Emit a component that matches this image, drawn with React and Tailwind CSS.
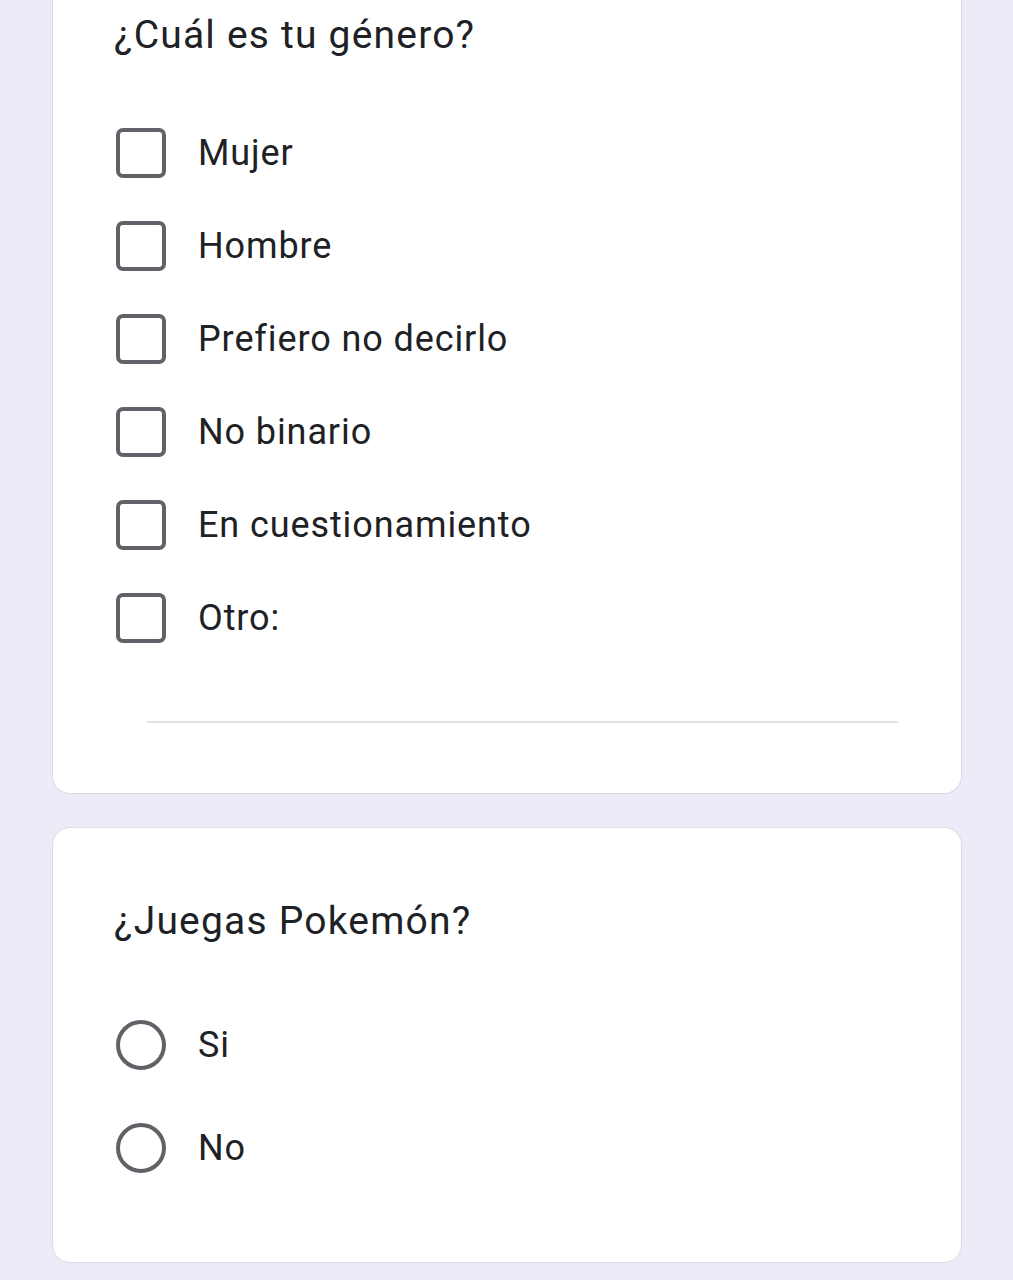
import React from "react";

const GENDER_OPTIONS = ["Mujer", "Hombre", "Prefiero no decirlo", "No binario", "En cuestionamiento", "Otro:"];
const POKEMON_OPTIONS = ["Si", "No"];

function Checkbox() {
  return <div className="w-[50px] h-[50px] shrink-0 rounded-[7px] border-[4.5px] border-[#5f6368] bg-white" />;
}

function Radio() {
  return <div className="w-[50px] h-[50px] shrink-0 rounded-full border-[4.5px] border-[#5f6368] bg-white" />;
}

export default function App() {
  return (
    <div
      className="min-h-[1280px] bg-[#eeeaf7] pl-[52px] pr-[51px] pb-[18px] flex flex-col text-[#202124]"
      style={{ fontFamily: "Roboto, 'Noto Sans', sans-serif" }}
    >
      {/* Gender card (top is cut off by the viewport) */}
      <div className="bg-white border border-t-0 border-[#dcdbe2] rounded-b-[18px] pl-[61px] pr-[63px] pt-[12px] h-[794px]">
        <h2 className="text-[39px] leading-[46px] tracking-[1.2px]">¿Cuál es tu género?</h2>
        <div className="mt-[48px] flex flex-col">
          {GENDER_OPTIONS.map((opt) => (
            <label key={opt} className="h-[93px] flex items-center">
              <span className="ml-[2px]">
                <Checkbox />
              </span>
              <span className="ml-[32px] text-[36px] leading-none tracking-[0.9px]">{opt}</span>
            </label>
          ))}
        </div>
        <div className="mt-[57px] ml-[33px] h-[2px] bg-[#e3e2e6]" />
      </div>

      {/* Pokemon card */}
      <div className="mt-[33px] bg-white border border-[#dcdbe2] rounded-[18px] pl-[61px] pr-[63px] pt-[70px] h-[436px]">
        <h2 className="text-[39px] leading-[46px] tracking-[1.2px]">¿Juegas Pokemón?</h2>
        <div className="mt-[51px] flex flex-col gap-[3px]">
          {POKEMON_OPTIONS.map((opt) => (
            <label key={opt} className="h-[100px] flex items-center">
              <span className="ml-[2px]">
                <Radio />
              </span>
              <span className="ml-[32px] text-[36px] leading-none tracking-[0.9px]">{opt}</span>
            </label>
          ))}
        </div>
      </div>
    </div>
  );
}
